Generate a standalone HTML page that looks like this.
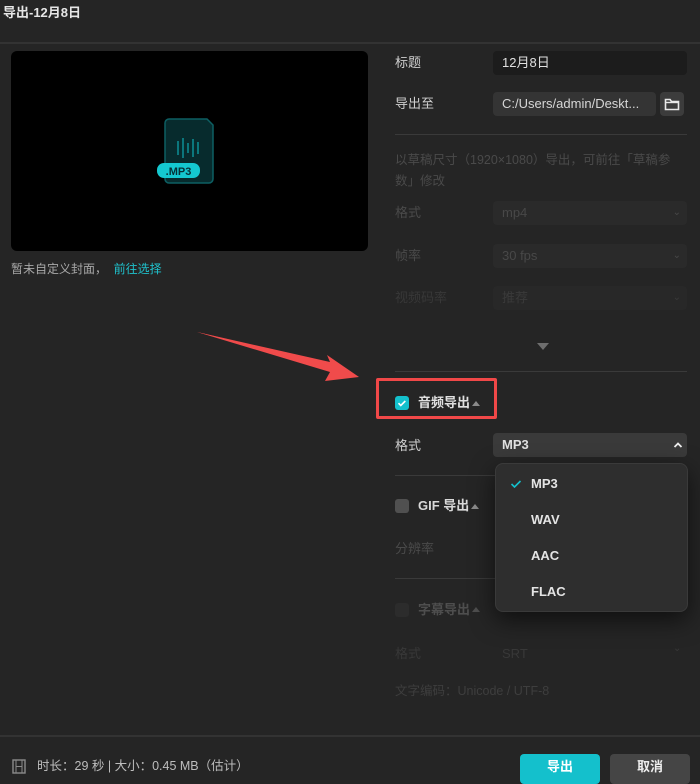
<!DOCTYPE html>
<html><head><meta charset="utf-8"><style>
*{margin:0;padding:0;box-sizing:border-box}
body{width:700px;height:778px;background:#252525;font-family:"Liberation Sans","Noto Sans CJK SC",sans-serif;color:#d8d8d8;position:relative;overflow:hidden;font-size:13px;line-height:1.2}
.a{position:absolute}
.lbl{position:absolute;left:395px;font-size:13px;color:#cfcfcf}
.dim{color:#4a4a4a}
.inp{position:absolute;left:493px;width:194px;height:24px;border-radius:4px;background:#1c1c1c;padding-left:9px;line-height:24px;font-size:13px}
.sel{background:#2a2a2a;color:#484848}
.hr{position:absolute;height:1px;background:#3a3a3a}
.chev{position:absolute;right:6px;top:0;font-size:10px}
</style></head><body>
<div class="a" style="left:3px;top:5px;font-size:13px;font-weight:bold;color:#e6e6e6">导出-12月8日</div>
<div class="hr" style="left:0;top:42px;width:700px;background:#333;height:2px"></div>

<div class="a" style="left:11px;top:51px;width:357px;height:200px;background:#000;border-radius:6px"></div>
<svg class="a" style="left:155px;top:117px" width="62" height="70" viewBox="0 0 62 70">
<path d="M14 2h38l6 6v54a4 4 0 0 1-4 4H14a4 4 0 0 1-4-4V6a4 4 0 0 1 4-4z" fill="#072b2d" stroke="#0d5f63" stroke-width="1.5"/>
<g stroke="#0d8a90" stroke-width="1.6"><line x1="23" y1="24" x2="23" y2="38"/><line x1="28" y1="21" x2="28" y2="41"/><line x1="33" y1="26" x2="33" y2="36"/><line x1="38" y1="22" x2="38" y2="40"/><line x1="43" y1="25" x2="43" y2="37"/></g>
<rect x="2" y="46" width="43" height="15" rx="7" fill="#14c8d0"/>
<text x="23.5" y="58" font-size="11" font-weight="bold" fill="#063036" text-anchor="middle" font-family="Liberation Sans">.MP3</text>
</svg>
<div class="a" style="left:11px;top:262px;font-size:12px;color:#a8a8a8">暂未自定义封面，&nbsp; <span style="color:#1fc1cc">前往选择</span></div>

<div class="lbl" style="top:55px">标题</div>
<div class="inp" style="top:51px;color:#e0e0e0">12月8日</div>
<div class="lbl" style="top:96px">导出至</div>
<div class="inp" style="top:92px;width:163px;background:#343434;color:#d6d6d6">C:/Users/admin/Deskt...</div>
<div class="a" style="left:660px;top:92px;width:24px;height:24px;border-radius:4px;background:#3c3c3c"></div>
<svg class="a" style="left:664px;top:97px" width="16" height="14"><path d="M1.5 2.5h4.5l1.5 2h7v8h-13z" fill="none" stroke="#e8e8e8" stroke-width="1.6"/><line x1="1.5" y1="5.5" x2="14.5" y2="5.5" stroke="#e8e8e8" stroke-width="1.4"/></svg>
<div class="hr" style="left:395px;top:134px;width:292px"></div>
<div class="a dim" style="left:395px;top:150px;width:292px;font-size:12.5px;line-height:21px">以草稿尺寸（1920×1080）导出，可前往「草稿参数」修改</div>
<div class="lbl dim" style="top:205px">格式</div><div class="inp sel" style="top:201px">mp4<span class="chev">⌄</span></div>
<div class="lbl dim" style="top:248px">帧率</div><div class="inp sel" style="top:244px">30 fps<span class="chev">⌄</span></div>
<div class="lbl dim" style="top:290px;color:#383838">视频码率</div><div class="inp sel" style="top:286px;color:#3a3a3a;background:#282828">推荐<span class="chev">⌄</span></div>
<div class="a" style="left:537px;top:343px;width:0;height:0;border-left:6px solid transparent;border-right:6px solid transparent;border-top:7px solid #6e6e6e"></div>
<div class="hr" style="left:395px;top:371px;width:292px"></div>

<div class="a" style="left:376px;top:378px;width:121px;height:41px;border:3px solid #f04848;border-radius:2px"></div>
<div class="a" style="left:395px;top:396px;width:14px;height:14px;border-radius:3px;background:#14c0cc"></div>
<svg class="a" style="left:395px;top:396px" width="14" height="14"><path d="M3.5 7.2l2.3 2.3 4.5-4.5" fill="none" stroke="#fff" stroke-width="1.6"/></svg>
<div class="a" style="left:418px;top:395px;font-weight:bold;color:#e0e0e0;font-size:13px">音频导出</div>
<div class="a" style="left:472px;top:401px;border-left:4px solid transparent;border-right:4px solid transparent;border-bottom:5px solid #8a8a8a"></div>

<div class="lbl" style="top:438px">格式</div>
<div class="inp" style="top:433px;background:#3a3a3a;color:#e0e0e0;font-weight:bold">MP3</div>
<svg class="a" style="left:673px;top:441px" width="10" height="8"><path d="M1.5 6l3.5-3.5 3.5 3.5" fill="none" stroke="#eee" stroke-width="1.8"/></svg>
<div class="hr" style="left:395px;top:475px;width:100px"></div>

<div class="a" style="left:395px;top:499px;width:14px;height:14px;border-radius:3px;background:#505050"></div>
<div class="a" style="left:418px;top:498px;font-weight:bold;color:#d8d8d8">GIF 导出</div>
<div class="a" style="left:471px;top:504px;border-left:4px solid transparent;border-right:4px solid transparent;border-bottom:5px solid #8a8a8a"></div>
<div class="lbl dim" style="top:541px">分辨率</div>
<div class="hr" style="left:395px;top:578px;width:100px"></div>
<div class="a" style="left:395px;top:603px;width:14px;height:14px;border-radius:3px;background:#2c2c2c"></div>
<div class="a" style="left:418px;top:602px;font-weight:bold;color:#4e4e4e">字幕导出</div>
<div class="a" style="left:472px;top:607px;border-left:4px solid transparent;border-right:4px solid transparent;border-bottom:5px solid #4e4e4e"></div>
<div class="lbl" style="top:646px;color:#383838">格式</div>
<div class="a" style="left:502px;top:646px;color:#383838">SRT</div>
<div class="a" style="left:673px;top:643px;color:#383838;font-size:10px">⌄</div>
<div class="a" style="left:395px;top:684px;color:#3e3e3e;font-size:12.5px">文字编码：Unicode / UTF-8</div>

<div class="a" style="left:495px;top:463px;width:193px;height:149px;background:#2e2e2e;border:1px solid #3a3a3a;border-radius:8px;box-shadow:0 8px 24px rgba(0,0,0,.6)"></div>
<svg class="a" style="left:510px;top:479px" width="12" height="10"><path d="M1.5 5l3 3 6-6" fill="none" stroke="#14c0cc" stroke-width="1.6"/></svg>
<div class="a" style="left:531px;top:476px;font-weight:bold;color:#e4e4e4">MP3</div>
<div class="a" style="left:531px;top:512px;font-weight:bold;color:#e4e4e4">WAV</div>
<div class="a" style="left:531px;top:548px;font-weight:bold;color:#e4e4e4">AAC</div>
<div class="a" style="left:531px;top:584px;font-weight:bold;color:#e4e4e4">FLAC</div>

<svg class="a" style="left:0;top:0" width="700" height="778"><path d="M197 332 L330 362 L327 355 L359 377 L325 381 L330 372 Z" fill="#f04b4b"/><path d="M197 332 L332 364 L331 369 Z" fill="#f04b4b"/></svg>

<div class="hr" style="left:0;top:735px;width:700px;height:2px;background:#333"></div>
<svg class="a" style="left:12px;top:759px" width="14" height="15"><rect x="1" y="1" width="12" height="13" fill="none" stroke="#8a8a8a" stroke-width="1.4"/><line x1="4" y1="1" x2="4" y2="14" stroke="#8a8a8a"/><line x1="10" y1="1" x2="10" y2="14" stroke="#8a8a8a"/><line x1="4" y1="7.5" x2="10" y2="7.5" stroke="#8a8a8a"/></svg>
<div class="a" style="left:37px;top:759px;font-size:12.5px;color:#bdbdbd">时长：29 秒 | 大小：0.45 MB（估计）</div>
<div class="a" style="left:520px;top:754px;width:80px;height:30px;border-radius:4px;background:#14c0cc;color:#fff;font-weight:bold;text-align:center;line-height:26px">导出</div>
<div class="a" style="left:610px;top:754px;width:80px;height:30px;border-radius:4px;background:#454545;color:#eee;font-weight:bold;text-align:center;line-height:26px">取消</div>
</body></html>
